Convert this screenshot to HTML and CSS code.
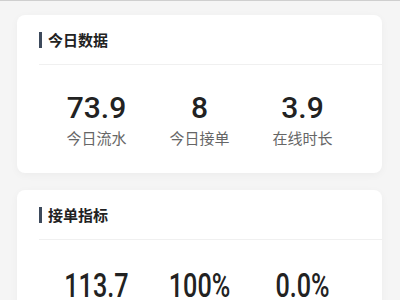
FILE: index.html
```html
<!DOCTYPE html>
<html lang="zh-CN">
<head>
    <meta charset="UTF-8">
    <meta name="viewport" content="width=device-width, initial-scale=1.0">
    <title>数据统计</title>
    <link rel="stylesheet" href="styles.css">
</head>
<body>
    <div class="page">
        <!-- 今日数据 -->
        <section class="card">
            <div class="card-head">
                <span class="card-mark"></span>
                <h2 class="card-title">今日数据</h2>
            </div>
            <div class="stats">
                <div class="stat">
                    <div class="stat-num">73.9</div>
                    <div class="stat-label">今日流水</div>
                </div>
                <div class="stat">
                    <div class="stat-num">8</div>
                    <div class="stat-label">今日接单</div>
                </div>
                <div class="stat">
                    <div class="stat-num">3.9</div>
                    <div class="stat-label">在线时长</div>
                </div>
            </div>
        </section>

        <!-- 接单指标 -->
        <section class="card">
            <div class="card-head">
                <span class="card-mark"></span>
                <h2 class="card-title">接单指标</h2>
            </div>
            <div class="stats">
                <div class="stat">
                    <div class="stat-num stat-num-narrow">113.7</div>
                    <div class="stat-label">服务分</div>
                </div>
                <div class="stat">
                    <div class="stat-num stat-num-narrow">100%</div>
                    <div class="stat-label">完成率</div>
                </div>
                <div class="stat">
                    <div class="stat-num stat-num-narrow">0.0%</div>
                    <div class="stat-label">取消率</div>
                </div>
            </div>
        </section>
    </div>
</body>
</html>
```

FILE: styles.css
```css
body {
    margin: 0;
    background-color: #f5f5f5;
    border-top: 1px solid #cfcfcf;
    font-family: Roboto, "Noto Sans CJK SC", sans-serif;
    color: #222;
}
.page {
    display: flex;
    flex-direction: column;
    gap: 17px;
    padding: 14px 18px 0 17px;
}
.card {
    background-color: #fff;
    border-radius: 8px;
    box-shadow: 0 2px 8px rgba(0,0,0,0.04);
}
.card-head {
    display: flex;
    align-items: center;
    height: 49px;
    margin-left: 22px;
    border-bottom: 1px solid #f0f0f0;
}
.card-mark {
    width: 3px;
    height: 16px;
    margin-right: 6px;
    background-color: #3d4a5c;
}
.card-title {
    margin: 0;
    font-family: "Noto Sans CJK SC", sans-serif;
    font-size: 15px;
    font-weight: 700;
    line-height: 20px;
    color: #222;
}
.stats {
    display: grid;
    grid-template-columns: repeat(3, 1fr);
    padding: 28px 28px 25px;
}
.stat {
    display: flex;
    flex-direction: column;
    align-items: center;
}
.stat-num {
    font-family: Roboto, sans-serif;
    font-size: 30px;
    font-weight: 500;
    line-height: 30px;
    color: #222;
}
/* condensed digits in the second card */
.stat-num-narrow {
    margin-top: 2px;
    font-size: 34px;
    transform: scaleX(0.74);
}
.stat-label {
    margin-top: 5px;
    font-family: "Noto Sans CJK SC", sans-serif;
    font-size: 15px;
    line-height: 20px;
    color: #666;
}
```
